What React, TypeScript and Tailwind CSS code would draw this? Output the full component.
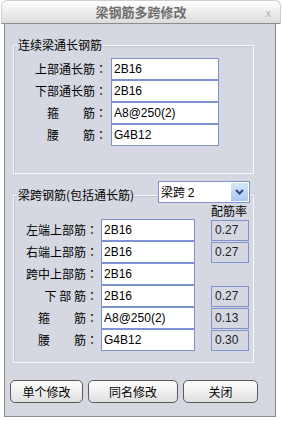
import React from "react";

const Colon = () => <span className="font-['Noto_Sans_CJK_JP',sans-serif]">：</span>;

const Row1 = ({ label, value }: { label: string; value: string }) => (
  <div className="flex items-center h-[22px]">
    <span className="w-[93px] text-right text-[12px] leading-[14px] whitespace-pre text-black font-['Noto_Sans_CJK_SC',sans-serif]">
      {label}
      <Colon />
    </span>
    <div className="ml-[4px] w-[108px] h-[22px] border border-[#7F92CF] bg-white pl-[2px] text-[12px] leading-[20px] text-black font-['Liberation_Sans',sans-serif]">
      {value}
    </div>
  </div>
);

const Row2 = ({ label, value, ratio }: { label: string; value: string; ratio?: string }) => (
  <div className="flex h-[22px]">
    <span className="w-[84px] self-center text-right text-[12px] leading-[14px] whitespace-pre text-black font-['Noto_Sans_CJK_SC',sans-serif]">
      {label}
      <Colon />
    </span>
    <div className="ml-[3px] w-[94px] h-[22px] border border-[#7F92CF] bg-white pl-[2px] text-[12px] leading-[20px] text-black font-['Liberation_Sans',sans-serif]">
      {value}
    </div>
    {ratio ? (
      <div className="ml-[16px] mt-[1px] w-[38px] h-[21px] border border-[#7F92CF] bg-[#D5D8E0] pl-[3px] text-[12px] leading-[19px] text-[#222] font-['Liberation_Sans',sans-serif]">
        {ratio}
      </div>
    ) : null}
  </div>
);

export default function App() {
  return (
    <div className="w-[282px] h-[421px] bg-white flex flex-col font-['Noto_Sans_CJK_SC',sans-serif]">
      <div className="mx-[1px] w-[280px] h-[24px] shrink-0 rounded-t-[6px] border border-[#cfcfcf] border-b-[#8c8c8c] bg-linear-to-b from-[#ffffff] to-[#dcdcdc] flex items-center relative">
        <span className="flex-1 text-center text-[13px] leading-[16px] font-bold text-[#6e6e6e]">梁钢筋多跨修改</span>
        <span className="absolute right-[9px] top-[6px] text-[11px] leading-[12px] text-[#b0b0b0] font-['Liberation_Sans',sans-serif]">x</span>
      </div>
      <div className="ml-[4px] w-[272px] h-[393px] shrink-0 border-x border-b border-[#8a8a8a] bg-[#D5D8E0] flex flex-col">
        <div className="ml-[8px] mt-[21px] w-[241px] h-[129px] border border-[#f6f7fa] relative pt-[12px] shadow-[inset_1px_1px_0_#c0c4cc]">
          <span className="absolute left-[3px] top-[-8px] px-[1px] bg-[#D5D8E0] text-[12px] leading-[14px] text-black">连续梁通长钢筋</span>
          <Row1 label="上部通长筋" value="2B16" />
          <Row1 label="下部通长筋" value="2B16" />
          <Row1 label={"箍\u3000\u3000筋"} value="A8@250(2)" />
          <Row1 label={"腰\u3000\u3000筋"} value="G4B12" />
        </div>
        <div className="ml-[8px] mt-[21px] w-[241px] h-[168px] border border-[#f6f7fa] relative shadow-[inset_1px_1px_0_#c0c4cc]">
          <span className="absolute left-[3px] top-[-8px] px-[1px] bg-[#D5D8E0] text-[12px] leading-[14px] text-black">梁跨钢筋(包括通长筋)</span>
          <div className="absolute left-[144px] top-[-15px] w-[92px] h-[22px] border border-[#7F92CF] bg-white flex items-center">
            <span className="flex-1 pl-[2px] text-[12px] leading-[14px] text-black">
              梁跨 <span className="font-['Liberation_Sans',sans-serif]">2</span>
            </span>
            <div className="mr-[1px] w-[17px] h-[18px] bg-linear-to-b from-[#d6e6fa] to-[#a9c9ef] flex items-center justify-center">
              <svg width="9" height="6" viewBox="0 0 9 6">
                <path d="M1 1 L4.5 4.5 L8 1" stroke="#2a4a8a" strokeWidth="2" fill="none" />
              </svg>
            </div>
          </div>
          <div className="h-[23px] pl-[197px] pt-[8px] text-[12px] leading-[14px] text-black">配筋率</div>
          <Row2 label="左端上部筋" value="2B16" ratio="0.27" />
          <Row2 label="右端上部筋" value="2B16" ratio="0.27" />
          <Row2 label="跨中上部筋" value="2B16" />
          <Row2 label="下 部 筋" value="2B16" ratio="0.27" />
          <Row2 label={"箍\u3000\u3000筋"} value="A8@250(2)" ratio="0.13" />
          <Row2 label={"腰\u3000\u3000筋"} value="G4B12" ratio="0.30" />
        </div>
        <div className="ml-[5px] mt-[17px] flex gap-[5px]">
          <button className="w-[73px] h-[23px] rounded-[5px] border border-[#5a5a5a] bg-linear-to-b from-[#ffffff] to-[#e0e0e0] text-[12px] leading-[14px] text-black">单个修改</button>
          <button className="w-[90px] h-[23px] rounded-[5px] border border-[#5a5a5a] bg-linear-to-b from-[#ffffff] to-[#e0e0e0] text-[12px] leading-[14px] text-black">同名修改</button>
          <button className="w-[75px] h-[23px] rounded-[5px] border border-[#5a5a5a] bg-linear-to-b from-[#ffffff] to-[#e0e0e0] text-[12px] leading-[14px] text-black">关闭</button>
        </div>
      </div>
    </div>
  );
}
